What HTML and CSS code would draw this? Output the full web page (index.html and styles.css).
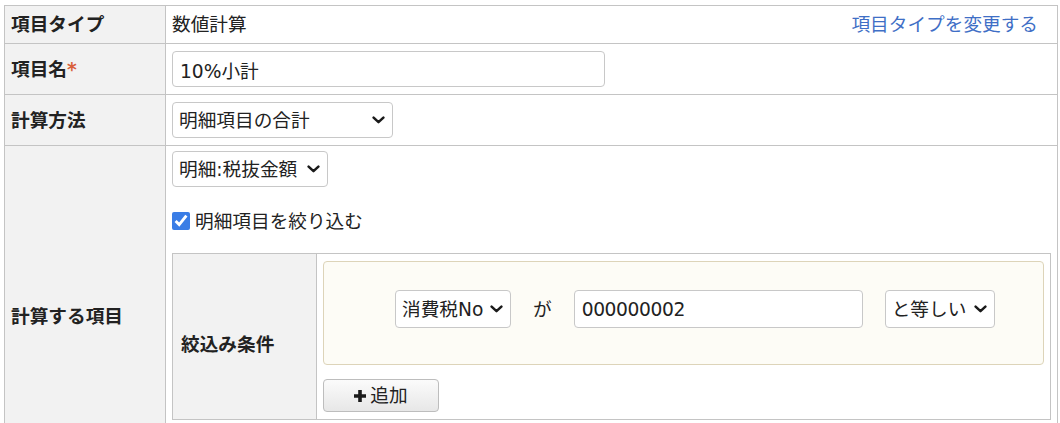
FILE: index.html
```html
<!DOCTYPE html>
<html lang="ja">
<head>
<meta charset="utf-8">
<title>計算項目の設定</title>
<link rel="stylesheet" href="styles.css">
</head>
<body>
<table class="form">
  <colgroup><col class="c-label"><col></colgroup>
  <tr>
    <th>項目タイプ</th>
    <td>
      <div class="type-cell">
        <span>数値計算</span>
        <a href="#" class="link">項目タイプを変更する</a>
      </div>
    </td>
  </tr>
  <tr>
    <th>項目名<span class="req">*</span></th>
    <td><input class="txt txt-name" type="text" value="10%小計"></td>
  </tr>
  <tr>
    <th>計算方法</th>
    <td>
      <span class="sel sel-method">
        <select><option>明細項目の合計</option></select>
        <svg class="chev" viewBox="0 0 13 8" width="13" height="8"><path d="M1.6 1.6 L6.5 6.2 L11.4 1.6"/></svg>
      </span>
    </td>
  </tr>
  <tr>
    <th>計算する項目</th>
    <td class="items-cell">
      <span class="sel sel-field">
        <select><option>明細:税抜金額</option></select>
        <svg class="chev" viewBox="0 0 13 8" width="13" height="8"><path d="M1.6 1.6 L6.5 6.2 L11.4 1.6"/></svg>
      </span>
      <label class="check-line">
        <input type="checkbox" class="chk" checked>
        <span>明細項目を絞り込む</span>
      </label>
      <table class="cond">
        <colgroup><col class="c-cond-label"><col></colgroup>
        <tr>
          <th>絞込み条件</th>
          <td>
            <div class="cond-box">
              <div class="cond-row">
                <span class="sel sel-tax">
                  <select><option>消費税No</option></select>
                  <svg class="chev" viewBox="0 0 13 8" width="13" height="8"><path d="M1.6 1.6 L6.5 6.2 L11.4 1.6"/></svg>
                </span>
                <span class="ga">が</span>
                <input class="txt txt-val" type="text" value="000000002">
                <span class="sel sel-op">
                  <select><option>と等しい</option></select>
                  <svg class="chev" viewBox="0 0 13 8" width="13" height="8"><path d="M1.6 1.6 L6.5 6.2 L11.4 1.6"/></svg>
                </span>
              </div>
            </div>
            <button type="button" class="btn-add">
              <svg class="plus" viewBox="0 0 12 12" width="12" height="12"><path d="M4.2 0h3.6v4.2H12v3.6H7.8V12H4.2V7.8H0V4.2h4.2z"/></svg>
              <span>追加</span>
            </button>
          </td>
        </tr>
      </table>
    </td>
  </tr>
</table>
</body>
</html>
```

FILE: styles.css
```css
* { box-sizing: border-box; }

body {
  margin: 0;
  padding: 5px 0 0 4px;
  font-family: "DejaVu Sans", "Noto Sans CJK JP", sans-serif;
  font-size: 18.67px;
  color: #222;
  background: #fff;
}

.form {
  border-collapse: collapse;
  table-layout: fixed;
  width: 1054px;
}

.c-label { width: 161px; }

.form th,
.form td {
  border: 1px solid #c4c4c4;
  padding: 7px 6px;
  line-height: 23px;
  text-align: left;
}

.form th {
  background: #f2f2f2;
  font-weight: bold;
  vertical-align: middle;
}

.form td { vertical-align: top; }

.type-cell {
  display: flex;
  justify-content: space-between;
  padding-right: 13px;
}

.link {
  color: #3f6fc6;
  text-decoration: none;
}

.req { color: #d9603b; }

.txt {
  display: block;
  height: 36px;
  border: 1px solid #c8c8c8;
  border-radius: 4px;
  padding: 0 7px;
  font: inherit;
  color: #222;
  background: #fff;
  outline: none;
}

.txt-name { width: 433px; }

.txt-val {
  width: 289px;
  height: 38px;
  letter-spacing: -0.4px;
}

.sel {
  display: inline-flex;
  align-items: center;
  height: 36px;
  border: 1px solid #c8c8c8;
  border-radius: 4px;
  background: #fff;
  padding-right: 7px;
  vertical-align: top;
}

.sel select {
  appearance: none;
  -webkit-appearance: none;
  border: 0;
  background: transparent;
  font: inherit;
  color: #222;
  padding: 0 0 0 6px;
  margin: 0;
  height: 100%;
  flex: 1;
  min-width: 0;
  outline: none;
}

.chev {
  flex: none;
  fill: none;
  stroke: #1a1a1a;
  stroke-width: 2.5;
  stroke-linecap: round;
  stroke-linejoin: round;
}

.sel-method { width: 221px; }
.sel-field { width: 156px; }

.items-cell.items-cell {
  padding: 5px 6px 66px;
}

.check-line {
  display: flex;
  align-items: center;
  gap: 5px;
  height: 32px;
  margin: 18px 0 16px;
}

.chk {
  width: 18px;
  height: 18px;
  margin: 0;
  accent-color: #3a7de6;
}

.cond {
  width: 100%;
  border-collapse: collapse;
  table-layout: fixed;
}

.c-cond-label { width: 144px; }

.form .cond th,
.form .cond td {
  border: 1px solid #c4c4c4;
}

.form .cond th {
  padding: 16px 8px 0;
}

.form .cond td {
  padding: 7px 6px;
  background: #fff;
}

.cond-box {
  height: 104px;
  background: #fdfcf6;
  border: 1px solid #ddd4b9;
  border-radius: 4px;
  padding: 28px 0 0 71px;
}

.cond-row {
  display: flex;
  align-items: center;
  gap: 22px;
  height: 38px;
}

.cond-row .sel { height: 38px; }

.sel-tax { width: 116px; }
.sel-op { width: 110px; }

.btn-add {
  display: flex;
  align-items: center;
  justify-content: center;
  gap: 4px;
  width: 116px;
  height: 33px;
  margin-top: 14px;
  border: 1px solid #bdbdbd;
  border-radius: 4px;
  background: linear-gradient(#fbfbfb, #e7e7e7);
  font: inherit;
  color: #222;
  padding: 0;
}

.plus { fill: #1a1a1a; }
```
